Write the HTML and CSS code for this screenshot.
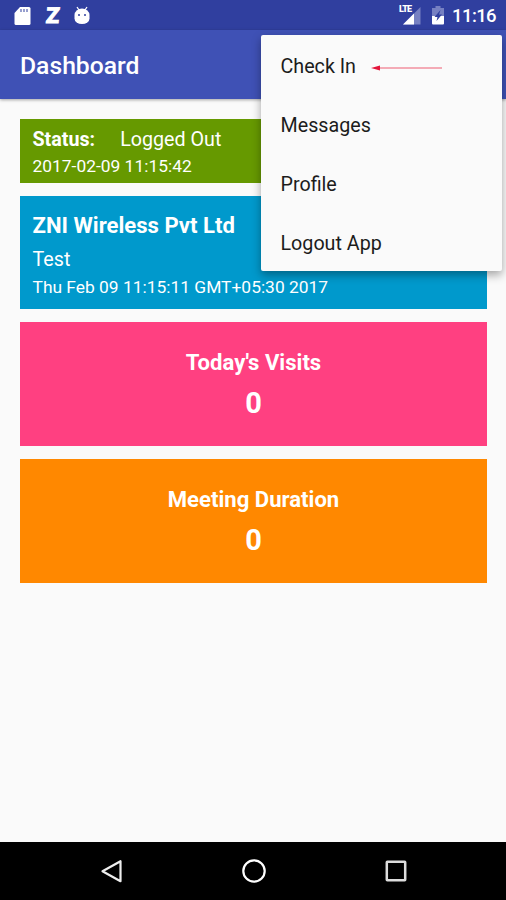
FILE: index.html
```
<!DOCTYPE html>
<html lang="en">
<head>
    <meta charset="UTF-8">
    <meta name="viewport" content="width=device-width, initial-scale=1.0">
    <title>Dashboard</title>
    <link rel="stylesheet" href="styles.css">
</head>
<body>
    <div class="screen">
        <div class="status-bar">
            <div class="notifications">
                <svg class="icon-sd" width="17" height="20" viewBox="0 0 17 20">
                    <path d="M6 1h9a1.500 1.500 0 0 1 1.500 1.500v15a1.500 1.500 0 0 1-1.500 1.500H2A1.500 1.500 0 0 1 .5 17.500V7z" fill="#fff"/>
                    <path d="M7 3v3M10 3v3M13 3v3" stroke="#7680c0" stroke-width="1.500"/>
                </svg>
                <span class="icon-z">Z</span>
                <svg class="icon-droid" width="16" height="20" viewBox="0 0 16 20">
                    <path d="M3 1l2 3M13 1l-2 3" stroke="#fff" stroke-width="1.300"/>
                    <path d="M.5 10V9a7.500 6.500 0 0 1 15 0v3.500a7.500 5.500 0 0 1-15 0z" fill="#fff"/>
                    <circle cx="5" cy="9" r="1" fill="#303f9f"/>
                    <circle cx="11" cy="9" r="1" fill="#303f9f"/>
                </svg>
            </div>
            <div class="system">
                <div class="signal">
                    <span class="lte">LTE</span>
                    <svg width="18" height="18" viewBox="0 0 18 18">
                        <path d="M17.500 0v17.500H0z" fill="#7680c2"/>
                        <path d="M11 6.500v11H0z" fill="#fff"/>
                    </svg>
                </div>
                <svg class="icon-battery" width="12" height="19" viewBox="0 0 12 19">
                    <path d="M3.500 0h5v2H12v8H0V2h3.500z" fill="#7680c2"/>
                    <path d="M0 10h12v7.500a1 1 0 0 1-1 1H1a1 1 0 0 1-1-1z" fill="#fff"/>
                    <path d="M8.500 4L2.500 11h3L4.500 15l5.500-6.500H7z" fill="#303f9f"/>
                </svg>
                <span class="clock">11:16</span>
            </div>
        </div>

        <div class="toolbar">
            <h1>Dashboard</h1>
        </div>

        <div class="content">
            <div class="card status">
                <p class="status-line"><strong>Status:</strong><span>Logged Out</span></p>
                <p class="time">2017-02-09 11:15:42</p>
            </div>
            <div class="card company">
                <h2>ZNI Wireless Pvt Ltd</h2>
                <p class="user">Test</p>
                <p class="time">Thu Feb 09 11:15:11 GMT+05:30 2017</p>
            </div>
            <div class="card counter visits">
                <h3>Today's Visits</h3>
                <p class="number">0</p>
            </div>
            <div class="card counter duration">
                <h3>Meeting Duration</h3>
                <p class="number">0</p>
            </div>
        </div>

        <div class="nav-bar">
            <svg width="24" height="26" viewBox="0 0 24 26">
                <path d="M20.500 3.200v20L2.500 13.200z" fill="none" stroke="#eee" stroke-width="2.200" stroke-linejoin="round"/>
            </svg>
            <svg width="26" height="26" viewBox="0 0 26 26">
                <circle cx="13" cy="13" r="10.700" fill="none" stroke="#fff" stroke-width="2.200"/>
            </svg>
            <svg width="24" height="26" viewBox="0 0 24 26">
                <rect x="2.800" y="3.800" width="18.400" height="18.400" rx="0.500" fill="none" stroke="#ddd" stroke-width="2.500"/>
            </svg>
        </div>

        <ul class="menu">
            <li>Check In
                <svg class="arrow" width="72" height="8" viewBox="0 0 72 8">
                    <path d="M6 4h65" stroke="#f2909f" stroke-width="1.500"/>
                    <path d="M0 4l9-2.500v5z" fill="#e3153a"/>
                </svg>
            </li>
            <li>Messages</li>
            <li>Profile</li>
            <li>Logout App</li>
        </ul>
    </div>
</body>
</html>
```
FILE: styles.css
```
* {
    box-sizing: border-box;
}
body {
    margin: 0;
    font-family: Roboto, "Liberation Sans", sans-serif;
    background-color: #fafafa;
    color: #fff;
}
h1, h2, h3, p, ul {
    margin: 0;
    padding: 0;
}
.screen {
    position: relative;
    display: flex;
    flex-direction: column;
    height: 900px;
    overflow: hidden;
}
.status-bar {
    display: flex;
    justify-content: space-between;
    align-items: center;
    height: 30px;
    padding: 1px 10px 0 14px;
    background-color: #303f9f;
}
.notifications, .system {
    display: flex;
    align-items: center;
}
.icon-z {
    width: 15px;
    margin: 0 13px 0 15px;
    font-size: 22px;
    line-height: 29px;
    font-weight: 900;
    transform: skewX(-6deg);
    -webkit-text-stroke: 0.8px #fff;
}
.signal {
    position: relative;
    padding: 0 0 0 4px;
    height: 18px;
}
.lte {
    position: absolute;
    left: 0;
    top: -2px;
    font-size: 9px;
    line-height: 9px;
    font-weight: 900;
    letter-spacing: -0.8px;
}
.icon-battery {
    margin: 0 8px 0 11px;
}
.clock {
    font-size: 18.500px;
    line-height: 29px;
    font-weight: 500;
    letter-spacing: -0.6px;
    padding-top: 1px;
}
.toolbar {
    display: flex;
    align-items: center;
    height: 69px;
    padding: 2px 20px 0;
    background-color: #3f51b5;
    box-shadow: 0 1px 3px rgba(0, 0, 0, 0.35);
}
.toolbar h1 {
    font-size: 24.700px;
    font-weight: 500;
}
.content {
    flex: 1;
    display: flex;
    flex-direction: column;
    gap: 13px;
    padding: 20px 19px 0 20px;
}
.card {
    padding: 0 13px 0 12.500px;
}
.status {
    height: 64px;
    padding-top: 8px;
    background-color: #669900;
}
.status-line {
    display: flex;
    gap: 25px;
    font-size: 19.700px;
    line-height: 26px;
}
.time {
    font-size: 17.400px;
    line-height: 27px;
}
.company {
    height: 112.500px;
    padding-top: 12px;
    background-color: #0099cc;
}
.company h2 {
    font-size: 22.100px;
    line-height: 34px;
}
.user {
    font-size: 19.700px;
    line-height: 36px;
}
.company .time {
    line-height: 18px;
}
.counter {
    height: 124.500px;
    padding: 25px 12px 0;
    text-align: center;
}
.counter h3 {
    font-size: 22.100px;
    line-height: 30px;
}
.number {
    font-size: 29px;
    line-height: 53px;
    font-weight: 700;
}
.visits {
    background-color: #ff4081;
}
.duration {
    height: 124px;
    background-color: #ff8800;
}
.nav-bar {
    display: flex;
    justify-content: space-between;
    align-items: center;
    height: 58px;
    padding: 0 98px 0 100px;
    background-color: #000;
}
.menu {
    position: absolute;
    top: 35px;
    left: 261px;
    width: 241px;
    height: 236px;
    list-style: none;
    background-color: #fafafa;
    border-radius: 2px;
    box-shadow: 0 4px 10px rgba(0, 0, 0, 0.35);
    color: #1c1c1c;
}
.menu li {
    display: flex;
    align-items: center;
    gap: 15px;
    height: 59px;
    padding: 4px 19.500px 0;
    font-size: 19.700px;
}
.arrow {
    margin-top: 2px;
}
```
